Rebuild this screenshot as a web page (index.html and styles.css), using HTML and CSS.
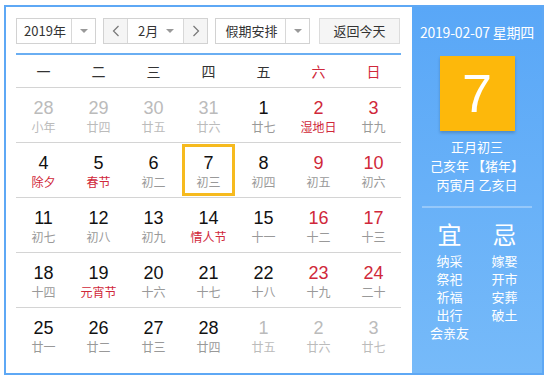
FILE: index.html
```html
<!DOCTYPE html>
<html lang="zh">
<head>
<meta charset="utf-8">
<title>万年历</title>
<link rel="stylesheet" href="styles.css">
</head>
<body>
<div class="cal">
  <div class="main">
    <div class="bar">
      <div class="sel sel-year"><span class="sel-text">2019年</span><span class="sel-drop"><i class="tri"></i></span></div>
      <div class="month">
        <span class="mbtn"><svg width="8" height="12" viewBox="0 0 8 12"><polyline points="6.5,1 1.5,6 6.5,11" fill="none" stroke="#777" stroke-width="1.2"/></svg></span>
        <span class="mval"><span>2月</span><i class="tri"></i></span>
        <span class="mbtn"><svg width="8" height="12" viewBox="0 0 8 12"><polyline points="1.5,1 6.5,6 1.5,11" fill="none" stroke="#777" stroke-width="1.2"/></svg></span>
      </div>
      <div class="sel sel-hol"><span class="sel-text">假期安排</span><span class="sel-drop"><i class="tri"></i></span></div>
      <div class="today-btn">返回今天</div>
    </div>
    <div class="week">
      <span>一</span><span>二</span><span>三</span><span>四</span><span>五</span><span class="red">六</span><span class="red">日</span>
    </div>
    <div class="row">
      <div class="cell other"><b>28</b><em>小年</em></div>
      <div class="cell other"><b>29</b><em>廿四</em></div>
      <div class="cell other"><b>30</b><em>廿五</em></div>
      <div class="cell other"><b>31</b><em>廿六</em></div>
      <div class="cell"><b>1</b><em>廿七</em></div>
      <div class="cell we"><b>2</b><em class="fest">湿地日</em></div>
      <div class="cell we"><b>3</b><em>廿九</em></div>
    </div>
    <div class="row">
      <div class="cell"><b>4</b><em class="fest">除夕</em></div>
      <div class="cell"><b>5</b><em class="fest">春节</em></div>
      <div class="cell"><b>6</b><em>初二</em></div>
      <div class="cell cur"><b>7</b><em>初三</em></div>
      <div class="cell"><b>8</b><em>初四</em></div>
      <div class="cell we"><b>9</b><em>初五</em></div>
      <div class="cell we"><b>10</b><em>初六</em></div>
    </div>
    <div class="row">
      <div class="cell"><b>11</b><em>初七</em></div>
      <div class="cell"><b>12</b><em>初八</em></div>
      <div class="cell"><b>13</b><em>初九</em></div>
      <div class="cell"><b>14</b><em class="fest">情人节</em></div>
      <div class="cell"><b>15</b><em>十一</em></div>
      <div class="cell we"><b>16</b><em>十二</em></div>
      <div class="cell we"><b>17</b><em>十三</em></div>
    </div>
    <div class="row">
      <div class="cell"><b>18</b><em>十四</em></div>
      <div class="cell"><b>19</b><em class="fest">元宵节</em></div>
      <div class="cell"><b>20</b><em>十六</em></div>
      <div class="cell"><b>21</b><em>十七</em></div>
      <div class="cell"><b>22</b><em>十八</em></div>
      <div class="cell we"><b>23</b><em>十九</em></div>
      <div class="cell we"><b>24</b><em>二十</em></div>
    </div>
    <div class="row last">
      <div class="cell"><b>25</b><em>廿一</em></div>
      <div class="cell"><b>26</b><em>廿二</em></div>
      <div class="cell"><b>27</b><em>廿三</em></div>
      <div class="cell"><b>28</b><em>廿四</em></div>
      <div class="cell other"><b>1</b><em>廿五</em></div>
      <div class="cell other"><b>2</b><em>廿六</em></div>
      <div class="cell other"><b>3</b><em>廿七</em></div>
    </div>
  </div>
  <div class="side">
    <div class="side-date">2019-02-07 星期四</div>
    <div class="big-day">7</div>
    <div class="lunar">
      <div>正月初三</div>
      <div>己亥年 【猪年】</div>
      <div>丙寅月 乙亥日</div>
    </div>
    <div class="divider"></div>
    <div class="yiji">
      <div class="col">
        <div class="head">宜</div>
        <div>纳采</div><div>祭祀</div><div>祈福</div><div>出行</div><div>会亲友</div>
      </div>
      <div class="col">
        <div class="head">忌</div>
        <div>嫁娶</div><div>开市</div><div>安葬</div><div>破土</div>
      </div>
    </div>
  </div>
</div>
</body>
</html>
```
FILE: styles.css
```css
* { box-sizing: border-box; }
html, body { margin: 0; padding: 0; background: #fff; }
body {
  font-family: "Noto Sans CJK SC", "Liberation Sans", sans-serif;
  color: #333;
}
.cal {
  margin: 5px 0 0 4px;
  width: 540px;
  height: 370px;
  border: 2px solid #5ea8f5;
  display: flex;
}
.main {
  width: 406px;
  padding: 11px 0 0 10px;
}
.bar {
  display: flex;
  height: 26px;
  width: 385px;
  font-size: 13px;
  line-height: 24px;
}
.sel {
  display: flex;
  border: 1px solid #d2d2d2;
  background: #fff;
}
.sel-year { width: 80px; }
.sel-hol { width: 95px; margin-left: 7px; }
.sel-text { flex: 1; text-align: center; padding-left: 2px; }
.sel-drop {
  width: 24px;
  border-left: 1px solid #d8d8d8;
  display: flex;
  align-items: center;
  justify-content: center;
}
.tri {
  display: inline-block;
  width: 0; height: 0;
  border-left: 4px solid transparent;
  border-right: 4px solid transparent;
  border-top: 4px solid #999;
}
.month {
  display: flex;
  width: 105px;
  margin-left: 7px;
  border: 1px solid #d2d2d2;
}
.mbtn {
  width: 23px;
  background: #f5f5f5;
  display: flex;
  align-items: center;
  justify-content: center;
}
.mval {
  flex: 1;
  display: flex;
  align-items: center;
  justify-content: space-between;
  padding: 0 9px 0 10px;
  border-left: 1px solid #d8d8d8;
  border-right: 1px solid #d8d8d8;
}
.today-btn {
  width: 81px;
  margin-left: 9px;
  border: 1px solid #dcdcdc;
  background: #f5f5f5;
  text-align: center;
}
.week {
  margin-top: 9px;
  width: 385px;
  height: 35px;
  border-top: 2px solid #6aaef2;
  border-bottom: 1px solid #d4d4d4;
  display: grid;
  grid-template-columns: repeat(7, 55px);
  align-items: center;
  font-size: 14px;
  line-height: 20px;
  text-align: center;
  color: #333;
}
.week .red { color: #d0283a; }
.row {
  width: 385px;
  height: 55px;
  border-bottom: 1px solid #d4d4d4;
  display: grid;
  grid-template-columns: repeat(7, 55px);
}
.row.last { border-bottom: none; }
.cell {
  display: flex;
  flex-direction: column;
  align-items: center;
  padding-top: 9px;
}
.cell b {
  font-family: "Liberation Sans", Arial, sans-serif;
  font-weight: normal;
  font-size: 18px;
  line-height: 22px;
  color: #111;
}
.cell em {
  font-style: normal;
  font-size: 12px;
  line-height: 16px;
  color: #999;
}
.cell.we b { color: #d0283a; }
.cell em.fest { color: #d0283a; }
.cell.other b, .cell.other em { color: #bbb; }
.cell.cur {
  outline: 3px solid #f6ba1e;
  outline-offset: -4px;
}
.side {
  width: 130px;
  background: linear-gradient(#59a7f7, #76baf9);
  color: #fff;
  display: flex;
  flex-direction: column;
  align-items: center;
  padding-top: 15px;
}
.side-date {
  font-size: 14px;
  line-height: 20px;
  letter-spacing: -0.2px;
}
.big-day {
  margin-top: 14px;
  width: 75px;
  height: 75px;
  background: #fdb80b;
  box-shadow: 0 2px 3px rgba(0, 0, 0, 0.2);
  font-family: "Liberation Sans", Arial, sans-serif;
  font-size: 54px;
  line-height: 75px;
  text-align: center;
  color: #fff;
}
.lunar {
  margin-top: 6px;
  font-size: 13px;
  line-height: 19px;
  text-align: center;
}
.divider {
  margin-top: 12px;
  width: 110px;
  height: 2px;
  background: rgba(255, 255, 255, 0.3);
}
.yiji {
  margin-top: 11px;
  display: flex;
}
.col {
  width: 55px;
  text-align: center;
  font-size: 13px;
  line-height: 18px;
}
.col .head {
  font-size: 24px;
  line-height: 30px;
  margin-bottom: 3px;
}
```
